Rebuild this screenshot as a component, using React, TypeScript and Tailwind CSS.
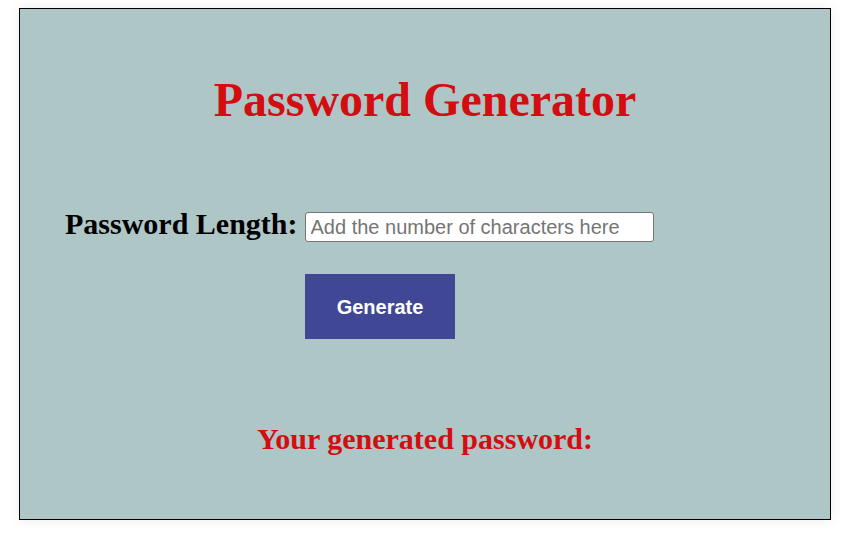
import React from "react";

export default function App() {
  return (
    <div className="w-[845px] h-[534px] bg-white pt-[8px] pl-[19px]">
      <div className="w-[812px] h-[512px] border border-black bg-[#afc6c7] shadow-[0_0_12px_rgba(0,0,0,0.08)] pt-[64px] font-['Liberation_Serif','Times_New_Roman',serif]">
        <h1 className="text-center text-[48px] leading-[53px] font-bold text-[#d30d10]">
          Password Generator
        </h1>
        <div className="mt-[81px] flex items-baseline pl-[45px] gap-[7px]">
          <label className="text-[30px] leading-[33px] font-bold text-black">
            Password Length:
          </label>
          <input
            type="text"
            placeholder="Add the number of characters here"
            className="w-[349px] h-[30px] bg-white border border-[#767676] rounded-[3px] pl-[5px] text-[20px] text-black placeholder:text-[#757575] outline-none font-['Liberation_Sans',Arial,sans-serif]"
          />
        </div>
        <div className="mt-[32px] pl-[285px]">
          <button className="w-[150px] h-[65px] bg-[#404896] text-white text-[20px] font-bold font-['Liberation_Sans',Arial,sans-serif]">
            Generate
          </button>
        </div>
        <h2 className="mt-[83px] text-center text-[30px] leading-[33px] font-bold text-[#d30d10]">
          Your generated password:
        </h2>
      </div>
    </div>
  );
}
